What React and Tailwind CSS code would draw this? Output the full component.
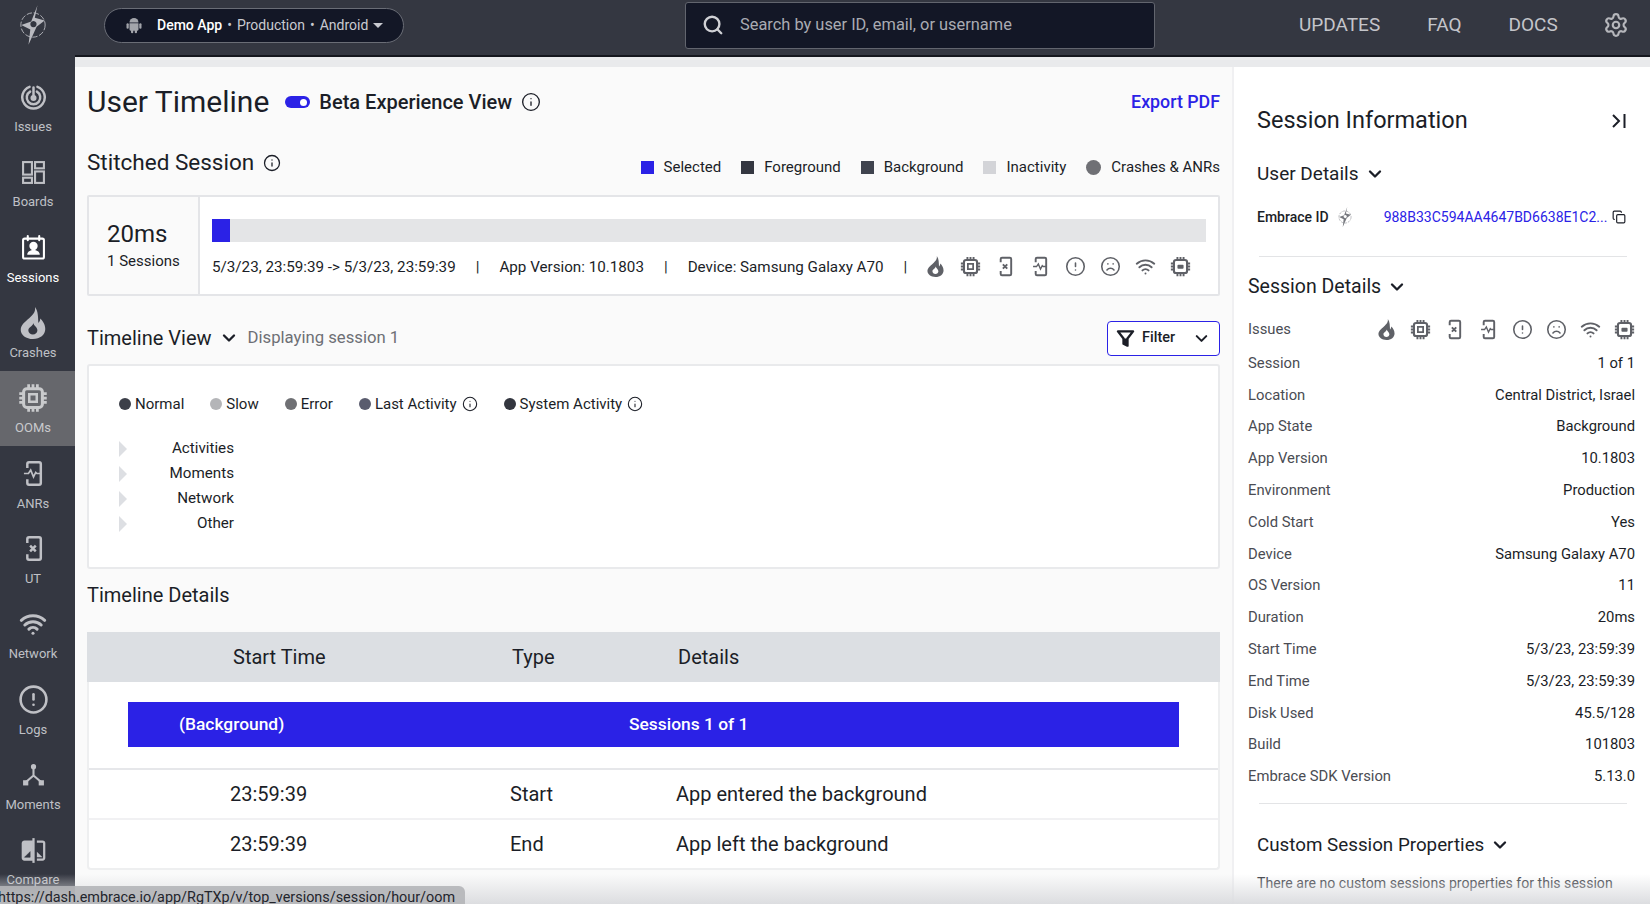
import { Search, Settings, Info, ChevronDown, Copy, Wifi, Frown, CircleAlert } from "lucide-react";

const font = { fontFamily: "Roboto, sans-serif" };

// custom icons, the packages have nothing close enough
function Flame({ className }) {
  return (
    <svg viewBox="0 0 24 24" className={className} fill="currentColor">
      <path
        fillRule="evenodd"
        d="M13.500 0c.6 3.800-1.700 6-4.400 8.500C6 11.300 2.800 13.500 2.800 17.200 2.800 21 6.800 24 12 24c5.300 0 9.200-3.200 9.200-7.500 0-3.500-1.900-5.800-3.700-7.800-.2 1.600-.7 2.600-1.500 3.300C15.800 8 16 3.300 13.500 0Zm-1.200 12c.3 2.200 3 3 3 5.500 0 1.800-1.500 3.200-3.400 3.200-1.900 0-3.400-1.400-3.400-3.200 0-2.500 3.400-3 3.800-5.500Z"
      />
    </svg>
  );
}

function Chip({ className, solid }) {
  return (
    <svg viewBox="0 0 24 24" className={className} fill="none" stroke="currentColor">
      <rect x="4.500" y="4.500" width="15" height="15" rx="2.500" strokeWidth="2.400" />
      <path strokeWidth="2.200" d="M8.500 1v3M12 1v3M15.500 1v3M8.500 20v3M12 20v3M15.500 20v3M1 8.500h3M1 12h3M1 15.500h3M20 8.500h3M20 12h3M20 15.500h3" />
      {solid ? (
        <rect x="8.500" y="10" width="7" height="4.500" rx="1" fill="currentColor" stroke="none" />
      ) : (
        <rect x="9" y="9" width="6" height="6" strokeWidth="2" />
      )}
    </svg>
  );
}

function Phone({ className, kind }) {
  return (
    <svg viewBox="0 0 24 24" className={className} fill="none" stroke="currentColor" strokeWidth="2.200">
      <path d="M6.500 7V3.500A1.500 1.500 0 0 1 8 2h9a1.500 1.500 0 0 1 1.500 1.500v17A1.500 1.500 0 0 1 17 22H8a1.500 1.500 0 0 1-1.500-1.500V17" />
      {kind === "x" ? (
        <path d="m9 9.500 5 5m0-5-5 5" />
      ) : (
        <path strokeWidth="1.500" d="M3.500 12h4l2-3 2.500 6 2-4 1 1h4" />
      )}
    </svg>
  );
}

function Target({ className }) {
  return (
    <svg viewBox="0 0 24 24" className={className} fill="none" stroke="currentColor" strokeWidth="2.200" strokeLinecap="round">
      <path d="M8.500 2.500a10 10 0 1 0 7 0" />
      <path d="M9 6.800a6 6 0 1 0 6 0" />
      <path d="M12 3v9" />
      <circle cx="12" cy="12.500" r="1.600" fill="currentColor" />
    </svg>
  );
}

function Boards({ className }) {
  return (
    <svg viewBox="0 0 24 24" className={className} fill="none" stroke="currentColor" strokeWidth="2">
      <rect x="2" y="2" width="8.500" height="12" />
      <rect x="13.500" y="2" width="8.500" height="6" />
      <rect x="2" y="17" width="8.500" height="5" />
      <rect x="13.500" y="11" width="8.500" height="11" />
    </svg>
  );
}

function Calendar({ className }) {
  return (
    <svg viewBox="0 0 24 24" className={className} fill="none" stroke="currentColor" strokeWidth="2">
      <rect x="2" y="3.500" width="20" height="19" rx="1.500" />
      <path strokeLinecap="round" d="M6.500 1v4M17.500 1v4" />
      <circle cx="12" cy="10.500" r="3" fill="currentColor" />
      <path fill="currentColor" stroke="none" d="M6 19c0-3 3-4.500 6-4.500s6 1.500 6 4.500Z" />
    </svg>
  );
}

function Moments({ className }) {
  return (
    <svg viewBox="0 0 24 24" className={className} fill="currentColor" stroke="currentColor" strokeWidth="2">
      <path fill="none" d="M12 6v7l-7 6M12 13l7 6" />
      <circle cx="12" cy="4.500" r="2.500" stroke="none" />
      <rect x="2" y="17.500" width="5" height="5" stroke="none" />
      <rect x="17" y="17.500" width="5" height="5" stroke="none" />
    </svg>
  );
}

function Compare({ className }) {
  return (
    <svg viewBox="0 0 24 24" className={className} fill="none" stroke="currentColor" strokeWidth="2">
      <path fill="currentColor" d="M10.500 4H4a1.500 1.500 0 0 0-1.500 1.500v13A1.500 1.500 0 0 0 4 20h6.500Z" />
      <path d="M12 1v22" />
      <path d="M15 4h5a1.500 1.500 0 0 1 1.500 1.500v13A1.500 1.500 0 0 1 20 20h-5" />
      <path fill="#343741" stroke="#343741" strokeWidth="0.500" d="M9 13v5H4Z" />
      <path fill="currentColor" stroke="none" d="M15 13v5h5Z" />
    </svg>
  );
}

function Logo({ className }) {
  return (
    <svg viewBox="0 0 40 48" className={className} fill="none" stroke="currentColor">
      <circle cx="20" cy="24" r="13.500" strokeWidth="1" strokeDasharray="6 2" />
      <path fill="currentColor" stroke="none" fillRule="evenodd" d="M25 2 22 16 33 19 24 26 15 46 17 29 7 24 18 20Zm-4.500 17.500a3.500 3.500 0 1 0 .01 0Z" />
    </svg>
  );
}

function Android({ className }) {
  return (
    <svg viewBox="0 0 24 24" className={className} fill="currentColor">
      <path d="M6 8.500a6 6 0 0 1 12 0Z" />
      <path d="M6 9.500h12V18a1.500 1.500 0 0 1-1.500 1.500H7.500A1.500 1.500 0 0 1 6 18Z" />
      <rect x="2" y="9.500" width="3" height="7.500" rx="1.500" />
      <rect x="19" y="9.500" width="3" height="7.500" rx="1.500" />
      <rect x="8" y="18" width="3" height="5" rx="1.500" />
      <rect x="13" y="18" width="3" height="5" rx="1.500" />
    </svg>
  );
}

function Funnel({ className }) {
  return (
    <svg viewBox="0 0 24 24" className={className} fill="none" stroke="currentColor" strokeWidth="3" strokeLinejoin="round">
      <path d="M2.500 3h19l-7 9v9l-5-2.500V12Z" />
      <path fill="currentColor" stroke="none" d="M10 12h4v8h-4Z" />
    </svg>
  );
}

const navItems = [
  { label: "Issues", Icon: Target, size: "size-[27px]" },
  { label: "Boards", Icon: Boards, size: "size-[25px]" },
  { label: "Sessions", Icon: Calendar, size: "size-[25px]", current: true },
  { label: "Crashes", Icon: Flame, size: "size-[32px]" },
  { label: "OOMs", Icon: Chip, size: "size-[30px]", active: true },
  { label: "ANRs", Icon: Phone, kind: "pulse", size: "size-[27px]" },
  { label: "UT", Icon: Phone, kind: "x", size: "size-[27px]" },
  { label: "Network", Icon: Wifi, size: "size-[28px]" },
  { label: "Logs", Icon: CircleAlert, size: "size-[31px]" },
  { label: "Moments", Icon: Moments, size: "size-[25px]" },
  { label: "Compare", Icon: Compare, size: "size-[27px]" },
];

const legend = [
  { label: "Selected", className: "size-[13px] bg-[#2b22e6]" },
  { label: "Foreground", className: "size-[13px] bg-[#343741]" },
  { label: "Background", className: "size-[13px] bg-[#3f434e]" },
  { label: "Inactivity", className: "size-[13px] bg-[#d3d4d8]" },
  { label: "Crashes & ANRs", className: "size-[15px] rounded-full bg-[#6f7075]" },
];

const dots = [
  { label: "Normal", color: "bg-[#3c3f49]" },
  { label: "Slow", color: "bg-[#b4b5b8]" },
  { label: "Error", color: "bg-[#6f7074]" },
  { label: "Last Activity", color: "bg-[#5a5c6e]", info: true },
  { label: "System Activity", color: "bg-[#33363f]", info: true },
];

const sessionRows = [
  ["Session", "1 of 1"],
  ["Location", "Central District, Israel"],
  ["App State", "Background"],
  ["App Version", "10.1803"],
  ["Environment", "Production"],
  ["Cold Start", "Yes"],
  ["Device", "Samsung Galaxy A70"],
  ["OS Version", "11"],
  ["Duration", "20ms"],
  ["Start Time", "5/3/23, 23:59:39"],
  ["End Time", "5/3/23, 23:59:39"],
  ["Disk Used", "45.5/128"],
  ["Build", "101803"],
  ["Embrace SDK Version", "5.13.0"],
];

function IssueIcons({ gap }) {
  const cls = "size-[21px] text-[#5f6167]";
  return (
    <div className={`flex items-center ${gap}`}>
      <Flame className={cls} />
      <Chip className={cls} />
      <Phone className={cls} kind="x" />
      <Phone className={cls} kind="pulse" />
      <CircleAlert className={cls} strokeWidth={1.8} />
      <Frown className={cls} strokeWidth={1.8} />
      <Wifi className={cls} strokeWidth={2.2} />
      <Chip className={cls} solid />
    </div>
  );
}

export default function App() {
  return (
    <div style={font} className="relative flex h-screen w-full flex-col overflow-hidden bg-[#343741] text-[#1b1e27]">
      {/* top bar */}
      <header className="flex h-[55px] shrink-0 items-center pb-[5px]">
        <div className="flex w-[75px] justify-center pr-[9px] text-[#b9bac0]">
          <Logo className="h-[46px] w-[36px]" />
        </div>
        <div className="ml-[29px] flex h-[35px] w-[300px] items-center rounded-full border border-[#6a6d76] bg-[#131726] pl-[20px] text-[14px] text-[#c9cad0]">
          <Android className="mr-[14px] size-[18px] text-[#a3a5ab]" />
          <span className="font-medium text-white">Demo App</span>
          <span className="mx-[5px]">•</span>
          <span>Production</span>
          <span className="mx-[5px]">•</span>
          <span>Android</span>
          <span className="ml-[5px] border-x-[5px] border-t-[5px] border-x-transparent border-t-[#c9cad0]" />
        </div>
        <div className="ml-[281px] flex h-[47px] w-[470px] items-center rounded-[3px] border border-[#62656e] bg-[#131726] pl-[16px] text-[16.400px] text-[#a9abb2]">
          <Search className="mr-[16px] size-[22px] text-[#d0d1d5]" strokeWidth={2.6} />
          Search by user ID, email, or username
        </div>
        <nav className="ml-[144px] flex items-center gap-[47px] text-[19px] text-[#c4c5ca]">
          <span>UPDATES</span>
          <span>FAQ</span>
          <span>DOCS</span>
          <Settings className="-ml-[2px] size-[26px] text-[#b5b6bb]" />
        </nav>
      </header>

      <div className="flex min-h-0 flex-1">
        {/* side nav */}
        <aside className="w-[75px] shrink-0 pt-[15px]">
          {navItems.map(({ label, Icon, size, kind, active, current }) => (
            <div
              key={label}
              className={`flex h-[75.300px] flex-col items-center justify-center gap-[5px] pr-[9px] text-[13px] ${
                active ? "bg-[#66676c] text-[#c9cacc]" : current ? "text-white" : "text-[#bfc0c5]"
              }`}
            >
              <div className="flex h-[34px] items-center">
                <Icon className={size} kind={kind} strokeWidth={Icon === Wifi ? 2.6 : undefined} />
              </div>
              <span className="leading-[16px]">{label}</span>
            </div>
          ))}
        </aside>

        <div className="flex min-w-0 flex-1 flex-col border-t-2 border-t-[#14161d] bg-[#e9eaec]">
          <div className="h-[10px] shrink-0" />
          <div className="flex min-h-0 flex-1">
            {/* main column */}
            <main className="w-[1157px] shrink-0 bg-[#fafafa] px-[12px]">
              <div className="flex h-[70px] items-center">
                <h1 className="text-[30px] leading-none">User Timeline</h1>
                <span className="ml-[16px] flex h-[12px] w-[25px] items-center justify-end rounded-full bg-[#2b22e6] pr-[3px]">
                  <span className="size-[7px] rounded-full bg-white" />
                </span>
                <span className="ml-[9px] text-[20px] font-medium">Beta Experience View</span>
                <Info className="ml-[9px] size-[20px]" strokeWidth={1.6} />
                <a className="ml-auto text-[17.800px] font-medium text-[#2b22e6]">Export PDF</a>
              </div>

              <div className="mt-[6px] flex h-[40px] items-center">
                <h2 className="text-[22.500px]">Stitched Session</h2>
                <Info className="ml-[9px] size-[18px]" strokeWidth={1.7} />
                <div className="ml-auto flex items-center gap-[20px] pt-[9px] text-[15px]">
                  {legend.map((l) => (
                    <span key={l.label} className="flex items-center gap-[10px]">
                      <span className={l.className} />
                      {l.label}
                    </span>
                  ))}
                </div>
              </div>

              <section className="mt-[12px] flex h-[101px] rounded-[2px] border-2 border-[#e4e5e8] bg-white">
                <div className="flex w-[111px] flex-col justify-center border-r-2 border-[#e4e5e8] bg-[#fafafa] pl-[18px]">
                  <span className="text-[24px] leading-[30px]">20ms</span>
                  <span className="mt-[1px] text-[15px]">1 Sessions</span>
                </div>
                <div className="flex-1 pl-[12px] pr-[12px] pt-[22px]">
                  <div className="h-[23px] bg-[#e4e5e7]">
                    <div className="h-full w-[18px] bg-[#2b22e6]" />
                  </div>
                  <div className="mt-[14px] flex items-center text-[15.200px]">
                    <span>5/3/23, 23:59:39 -&gt; 5/3/23, 23:59:39</span>
                    <span className="mx-[20px]">|</span>
                    <span>App Version: 10.1803</span>
                    <span className="mx-[20px]">|</span>
                    <span>Device: Samsung Galaxy A70</span>
                    <span className="ml-[20px] mr-[18px]">|</span>
                    <div className="-mt-[2px]">
                      <IssueIcons gap="gap-[14px]" />
                    </div>
                  </div>
                </div>
              </section>

              <div className="mt-[24px] flex h-[36px] items-center">
                <h2 className="text-[20px]">Timeline View</h2>
                <ChevronDown className="ml-[7px] size-[20px]" strokeWidth={2.8} />
                <span className="ml-[9px] text-[16.700px] text-[#6d6f75]">Displaying session 1</span>
                <button className="ml-auto flex h-[35px] w-[113px] items-center rounded-[4px] border border-[#2b22e6] bg-white px-[8px] text-[14.500px] font-medium">
                  <Funnel className="size-[19px]" />
                  <span className="ml-[7px]">Filter</span>
                  <ChevronDown className="ml-auto size-[19px]" strokeWidth={2.6} />
                </button>
              </div>

              <section className="mt-[8px] h-[205px] rounded-[3px] border-2 border-[#e9eaec] bg-white pl-[30px] pt-[28px]">
                <div className="flex items-center gap-[26px] text-[15px] leading-[20px]">
                  {dots.map((d) => (
                    <span key={d.label} className="flex items-center gap-[4px]">
                      <span className={`size-[12px] rounded-full ${d.color}`} />
                      {d.label}
                      {d.info && <Info className="ml-[1px] size-[16px]" strokeWidth={1.6} />}
                    </span>
                  ))}
                </div>
                <div className="mt-[22px] w-[115px] text-[15.200px]">
                  {["Activities", "Moments", "Network", "Other"].map((row) => (
                    <div key={row} className="flex h-[25px] items-center justify-between">
                      <span className="border-y-[8px] border-l-[8px] border-y-transparent border-l-[#dddfe3]" />
                      {row}
                    </div>
                  ))}
                </div>
              </section>

              <h2 className="mt-[12px] text-[20px] leading-[28px]">Timeline Details</h2>

              <section className="mt-[23px] rounded-b-[4px] border-x-2 border-b-2 border-[#eeeff0] bg-white">
                <div className="-mx-[2px] flex h-[50px] items-center bg-[#dcdfe3] text-[20px]">
                  <span className="ml-[146px] w-[279px]">Start Time</span>
                  <span className="w-[166px]">Type</span>
                  <span>Details</span>
                </div>
                <div className="border-b-2 border-[#e6e7ea] px-[39px] pb-[21px] pt-[20px]">
                  <div className="flex h-[45px] items-center bg-[#2b22e6] text-[17.400px] font-medium text-white">
                    <span className="ml-[51px] w-[450px]">(Background)</span>
                    <span>Sessions 1 of 1</span>
                  </div>
                </div>
                <div className="flex h-[50px] items-center border-b-2 border-[#f1f1f3] text-[20px]">
                  <span className="ml-[141px] w-[280px]">23:59:39</span>
                  <span className="w-[166px]">Start</span>
                  <span>App entered the background</span>
                </div>
                <div className="flex h-[48px] items-center text-[20px]">
                  <span className="ml-[141px] w-[280px]">23:59:39</span>
                  <span className="w-[166px]">End</span>
                  <span>App left the background</span>
                </div>
              </section>
            </main>

            {/* session panel */}
            <aside className="flex-1 border-l-2 border-[#f0f0f2] bg-white pl-[14px] pr-[15px]">
              <div className="mt-[27px] flex h-[50px] items-center justify-between pl-[9px] pr-[7px] pt-[4px]">
                <h2 className="text-[23.500px]">Session Information</h2>
                <svg viewBox="0 0 18 18" className="size-[18px]" fill="none" stroke="currentColor" strokeWidth="2">
                  <path d="m3 3 6 6-6 6M14.500 2v14" />
                </svg>
              </div>
              <div className="mt-[15px] flex h-[30px] items-center pl-[9px]">
                <h3 className="text-[19px]">User Details</h3>
                <ChevronDown className="ml-[6px] size-[20px]" strokeWidth={2.8} />
              </div>
              <div className="mt-[13px] flex h-[30px] items-center pl-[9px] text-[14px]">
                <span className="font-medium">Embrace ID</span>
                <Logo className="ml-[7px] h-[24px] w-[18px] text-[#77797f]" />
                <span className="ml-[30px] text-[#2b22e6]">988B33C594AA4647BD6638E1C2...</span>
                <Copy className="ml-[5px] size-[14px]" />
              </div>
              <div className="ml-[11px] mr-[8px] mt-[24px] h-px bg-[#e3e4e6]" />
              <div className="mt-[15px] flex h-[30px] items-center">
                <h3 className="text-[19.500px]">Session Details</h3>
                <ChevronDown className="ml-[6px] size-[20px]" strokeWidth={2.8} />
              </div>
              <div className="mt-[9px] flex h-[36px] items-center justify-between text-[14.800px] text-[#4a4c53]">
                <span>Issues</span>
                <IssueIcons gap="gap-[13px]" />
              </div>
              {sessionRows.map(([name, value]) => (
                <div key={name} className="flex h-[31.800px] items-center justify-between text-[14.800px]">
                  <span className="text-[#4a4c53]">{name}</span>
                  <span>{value}</span>
                </div>
              ))}
              <div className="ml-[11px] mr-[8px] mt-[11px] h-px bg-[#e3e4e6]" />
              <div className="mt-[26px] flex h-[30px] items-center pl-[9px]">
                <h3 className="text-[18.800px]">Custom Session Properties</h3>
                <ChevronDown className="ml-[6px] size-[20px]" strokeWidth={2.8} />
              </div>
              <p className="mt-[13px] pl-[9px] text-[14.100px] text-[#3a3c44]">There are no custom sessions properties for this session</p>
            </aside>
          </div>
        </div>
      </div>

      {/* browser bottom fade and status url */}
      <div className="pointer-events-none absolute inset-x-0 bottom-0 h-[30px] bg-gradient-to-b from-transparent to-[#dcdde0]" />
      <div className="absolute bottom-0 left-0 h-[18px] w-[465px] overflow-hidden rounded-tr-[6px] bg-[#b4b5b8]/90 text-[14.400px] leading-[24px] text-[#23252c]">
        <span className="-ml-[2px] block whitespace-nowrap">https://dash.embrace.io/app/RgTXp/v/top_versions/session/hour/oom</span>
      </div>
    </div>
  );
}
